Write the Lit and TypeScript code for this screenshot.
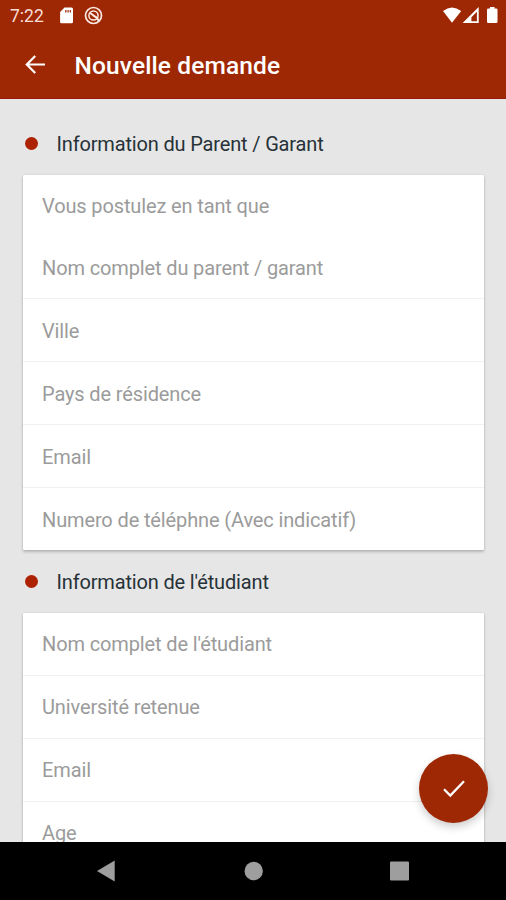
import { LitElement, html, css } from "lit";
import { customElement, property } from "lit/decorators.js";

@customElement("form-section")
class FormSection extends LitElement {
  @property() heading = "";
  @property({ type: Array }) fields: string[] = [];
  @property({ type: Boolean }) picker = false;

  static styles = css`
    :host { display: block; }
    .heading { display: flex; align-items: center; box-sizing: border-box; height: 63px; padding: 1px 2px 0; color: #263238; font-size: 20px; letter-spacing: -0.16px; }
    .dot { width: 13px; height: 13px; border-radius: 50%; background: #ad2203; margin-right: 18.5px; flex: none; position: relative; top: -1px; }
    .card { background: #fff; border-radius: 1px; box-shadow: 0 2px 3px rgba(0, 0, 0, 0.2), 0 0 2px rgba(0, 0, 0, 0.14); }
    .field { box-sizing: border-box; height: 63px; display: flex; align-items: center; padding: 0 19px 1px; color: #9b9b9b; font-size: 20px; letter-spacing: -0.13px; white-space: nowrap; }
    .field:first-child { height: 62px; }
    .field + .field { border-top: 1px solid #f0f0f0; }
    .picker .field { padding: 1px 19px 0; }
    .picker .field:nth-child(1) { height: 61px; }
    .picker .field:nth-child(2) { height: 62px; border-top: none; }
  `;

  render() {
    return html`
      <div class="heading"><span class="dot"></span><span>${this.heading}</span></div>
      <div class="card ${this.picker ? "picker" : ""}">
        ${this.fields.map((f) => html`<div class="field">${f}</div>`)}
      </div>
    `;
  }
}

@customElement("app-root")
class AppRoot extends LitElement {
  static styles = css`
    :host { display: flex; flex-direction: column; position: relative; width: 506px; height: 900px; overflow: hidden; background: #e6e6e6; font-family: Roboto, "Liberation Sans", sans-serif; }
    svg { display: block; flex: none; }
    header { height: 99px; flex: none; background: #9f2804; color: #fff; box-sizing: border-box; border-bottom: 1px solid #96190a; }
    .status { display: flex; align-items: center; height: 31px; padding: 0 6px 0 10px; font-size: 17.5px; }
    .time { width: 50px; color: #f8dfd6; }
    .sys { margin-left: auto; }
    .bar { display: flex; align-items: center; height: 68px; padding-left: 25px; }
    .title { margin-left: 28.5px; font-size: 24.5px; letter-spacing: 0.12px; font-weight: 500; line-height: 30px; padding-top: 1px; }
    main { flex: 1; min-height: 0; overflow: hidden; padding: 13px 22px 0 23px; }
    nav { height: 58px; flex: none; background: #000; }
    .fab { position: absolute; left: 419px; top: 754px; width: 69px; height: 69px; border-radius: 50%; background: #9f2804; display: flex; align-items: center; justify-content: center; box-shadow: 0 4px 8px rgba(0, 0, 0, 0.2); }
  `;

  render() {
    return html`
      <header>
        <div class="status">
          <span class="time">7:22</span>
          <svg width="44" height="20" viewBox="60 6 44 20">
            <path fill="#fff" fill-rule="evenodd" d="M64.5 7.5H71.5Q73 7.5 73 9V22Q73 23.3 71.7 23.3H61.4Q60.1 23.3 60.1 22V12ZM65.2 10V12.5H66.5V10ZM67.5 10V12.5H68.7V10ZM69.7 10V12.5H70.9V10Z"/>
            <g fill="none" stroke="#fbe9e2">
              <circle cx="93.5" cy="15.5" r="8" stroke-width="1.7" />
              <circle cx="93.5" cy="15.5" r="4.6" stroke-width="1.5" />
              <path stroke-width="2" d="M90 13.2C92 13.2 92.5 15.5 94.5 16.2S97 18.5 99 20.8" />
            </g>
          </svg>
          <svg class="sys" width="60" height="20" viewBox="440 6 60 20">
            <path fill="#fff" d="M443 11Q452 3.8 461.2 11L452 22.8Z" />
            <path fill="#fff" fill-rule="evenodd" d="M478.7 7V23H462.6ZM476.9 11.8L471.4 17.3V21.3H476.9Z" />
            <path fill="#fff" d="M490 7H494.5V8.5H496.2Q497.5 8.5 497.5 9.8V21.7Q497.5 23 496.2 23H488.3Q487 23 487 21.7V9.8Q487 8.5 488.3 8.5H490Z" />
          </svg>
        </div>
        <div class="bar">
          <svg width="21" height="20" viewBox="0 0 21 20"><path d="M20 9.5H2M10.2 1L1.8 9.5L10.2 18" fill="none" stroke="#fff" stroke-width="2.2" /></svg>
          <span class="title">Nouvelle demande</span>
        </div>
      </header>
      <main>
        <form-section picker heading="Information du Parent / Garant"
          .fields=${["Vous postulez en tant que", "Nom complet du parent / garant", "Ville", "Pays de résidence", "Email", "Numero de téléphne (Avec indicatif)"]}></form-section>
        <form-section heading="Information de l'étudiant"
          .fields=${["Nom complet de l'étudiant", "Université retenue", "Email", "Age"]}></form-section>
      </main>
      <div class="fab">
        <svg width="24" height="20" viewBox="442 779 24 20"><path d="M444 789.3L450.3 795.5L464 781.3" fill="none" stroke="#fff" stroke-width="2.3" /></svg>
      </div>
      <nav>
        <svg width="506" height="58" viewBox="0 842 506 58" fill="#9e9e9e">
          <path d="M97 871L114.7 860.5V881.5Z" />
          <circle cx="253.7" cy="871" r="9.2" />
          <rect x="390" y="861.5" width="19" height="19" rx="1" />
        </svg>
      </nav>
    `;
  }
}
